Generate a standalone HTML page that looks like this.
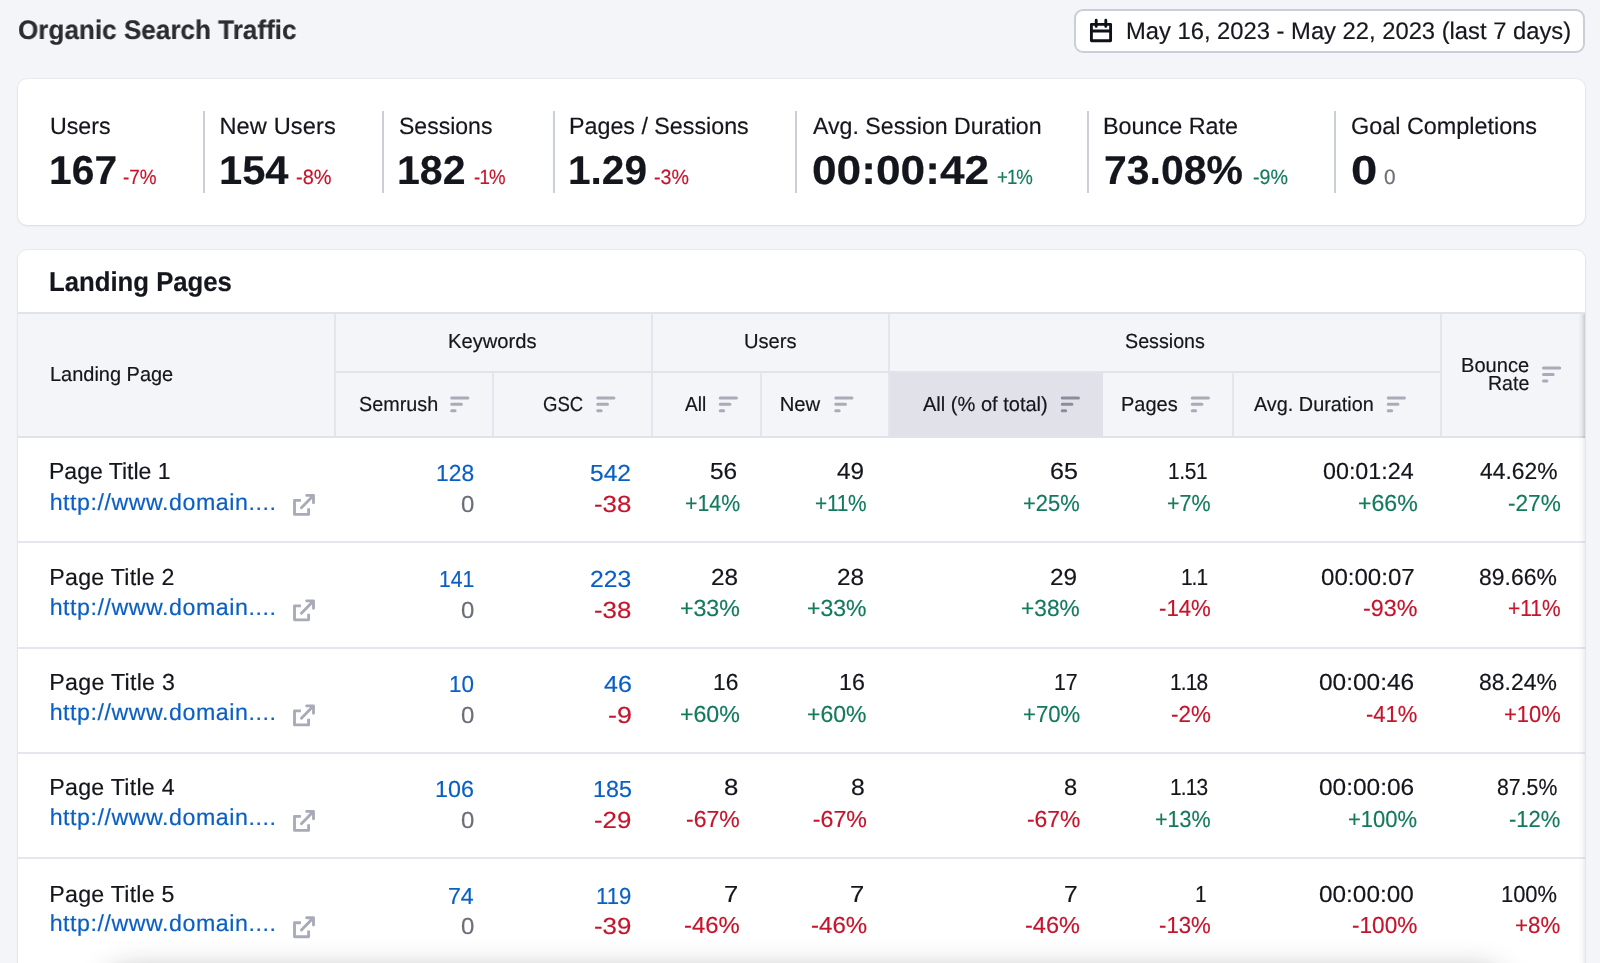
<!DOCTYPE html>
<html lang="en">
<head>
<meta charset="utf-8">
<title>Organic Search Traffic</title>
<style>
html,body{margin:0;padding:0}
body{position:relative;width:1600px;height:963px;overflow:hidden;background:#f4f5f9;font-family:"Liberation Sans", Arial, sans-serif;color:#14161c;text-rendering:geometricPrecision;-webkit-font-smoothing:antialiased}
*{box-sizing:border-box}
header,.card{will-change:transform}
.t{position:absolute;white-space:nowrap;margin:0;font-weight:400;transform-origin:0 0;-webkit-text-stroke:.18px currentColor}
h1.t{font-size:26.8px;line-height:30px;font-weight:700;color:#2b2b30}
.date{position:absolute;left:1074px;top:9px;width:511px;height:44px;background:#fff;border:2px solid #cbced6;border-radius:9px}
.date .t{font-size:24px;line-height:27px;color:#15171d}
.date svg{position:absolute;left:13px;top:7px;fill:none;stroke:#0f1118;stroke-width:2.85;stroke-linecap:round;stroke-linejoin:round}
.card{position:absolute;left:18px;width:1567px;background:#fff;border-radius:9px;box-shadow:0 0 0 1px rgba(25,27,35,.045),0 1px 3px rgba(25,27,35,.07)}
.stats{top:79px;height:146px}
.stat{position:absolute;top:31.5px;height:82px}
.stat+.stat{border-left:2px solid #cdcfd6}
.lbl{font-size:23.6px;line-height:26px}
.val{font-size:40.4px;line-height:46px;font-weight:700!important;color:#14161d}
.dlt{font-size:20.7px;line-height:23px}
.lp{top:250px;height:760px;overflow:hidden;border-radius:9px 9px 0 0}
h2.t{font-size:27.4px;line-height:31px;font-weight:700;color:#14161d}
.thead{position:absolute;left:0;top:62px;width:1567px;height:126px;background:#f4f5f9;border-top:2px solid #e2e3ea;border-bottom:2px solid #e2e3ea}
.thead .t{font-size:20.3px;line-height:22px}
.vl{position:absolute;width:2px;background:#e5e6ed}
.hl{position:absolute;height:2px;background:#e2e3ea}
.act{position:absolute;background:#e0e1e9}
.row{position:absolute;left:0;width:1567px;border-bottom:2px solid #e6e7ee}
.cell{position:absolute;top:0;height:100%}
.row .t{font-size:23.2px;line-height:26px}
.g{color:#6c6e79}.b{color:#0a5fc4}.up{color:#137a5c}.dn{color:#c5142b}
a.t{text-decoration:none}
svg.srt{position:absolute;fill:none;stroke:#a9abb6;stroke-width:3;stroke-linecap:round}
svg.srt.on{stroke:#8a8e9b}
svg.ext{position:absolute;fill:none;stroke:#a8abb7;stroke-width:2.85;stroke-linecap:round;stroke-linejoin:round}
.shr{position:absolute;right:0;width:7px}
.shb{position:absolute;left:105px;width:1400px;top:972px;height:60px;border-radius:24px;box-shadow:0 0 30px 0 rgba(25,27,35,.36)}

</style>
</head>
<body>
<header>
<h1 class="t" style="left:18.23px;top:15px;transform:scaleX(0.974)">Organic Search Traffic</h1>
<div class="date"><svg width="28" height="28" viewBox="0 0 28 28"><path d="M2.4 6.3H21.6V22.7H2.4ZM2.4 13H21.6M7.2 2.2V8.4M16.8 2.2V8.4"/></svg><span class="t" style="left:49.94px;top:7px;transform:scaleX(0.99)">May 16, 2023 - May 22, 2023 (last 7 days)</span></div>
</header>
<section class="card stats">
<div class="stat" style="left:0px;width:184.75px"><span class="t lbl" style="left:31.65px;top:3.5px;transform:scaleX(0.983)">Users</span><b class="t val" style="left:30.55px;top:36.5px;transform:scaleX(1.01)">167</b><span class="t dlt dn" style="left:105.16px;top:55.5px;transform:scaleX(0.914)">-7%</span></div>
<div class="stat" style="left:184.75px;width:178.75px"><span class="t lbl" style="left:14.66px;top:3.5px;letter-spacing:0.12px">New Users</span><b class="t val" style="left:13.89px;top:36.5px;transform:scaleX(1.032)">154</b><span class="t dlt dn" style="left:91.63px;top:55.5px;transform:scaleX(0.964)">-8%</span></div>
<div class="stat" style="left:363.5px;width:171.25px"><span class="t lbl" style="left:15.78px;top:3.5px;transform:scaleX(0.976)">Sessions</span><b class="t val" style="left:13.93px;top:36.5px;transform:scaleX(1.018)">182</b><span class="t dlt dn" style="left:90.42px;top:55.5px;letter-spacing:-0.83px;transform:scaleX(0.9)">-1%</span></div>
<div class="stat" style="left:534.75px;width:242px"><span class="t lbl" style="left:14.18px;top:3.5px;transform:scaleX(0.986)">Pages / Sessions</span><b class="t val" style="left:13.46px;top:36.5px;transform:scaleX(1.005)">1.29</b><span class="t dlt dn" style="left:99.64px;top:55.5px;transform:scaleX(0.949)">-3%</span></div>
<div class="stat" style="left:776.75px;width:292.25px"><span class="t lbl" style="left:16.5px;top:3.5px;transform:scaleX(0.981)">Avg. Session Duration</span><b class="t val" style="left:15.12px;top:36.5px;transform:scaleX(1.096)">00:00:42</b><span class="t dlt up" style="left:200.63px;top:55.5px;letter-spacing:-1.1px;transform:scaleX(0.9)">+1%</span></div>
<div class="stat" style="left:1069px;width:246.5px"><span class="t lbl" style="left:14.47px;top:3.5px;transform:scaleX(0.99)">Bounce Rate</span><b class="t val" style="left:15.02px;top:36.5px;transform:scaleX(1.015)">73.08%</b><span class="t dlt up" style="left:163.58px;top:55.5px;transform:scaleX(0.951)">-9%</span></div>
<div class="stat" style="left:1315.5px;width:251.5px"><span class="t lbl" style="left:15.7px;top:3.5px;transform:scaleX(0.992)">Goal Completions</span><b class="t val" style="left:15.32px;top:36.5px;transform:scaleX(1.17)">0</b><span class="t dlt g" style="left:48.65px;top:55.5px;transform:scaleX(1.005)">0</span></div>
</section>
<section class="card lp">
<h2 class="t" style="left:31.49px;top:16px;transform:scaleX(0.939)">Landing Pages</h2>
<div class="thead">
<div class="act" style="left:871.25px;top:57.3px;width:214px;height:64.7px"></div>
<div class="vl" style="left:316px;top:0;height:122px"></div>
<div class="vl" style="left:633px;top:0;height:122px"></div>
<div class="vl" style="left:870px;top:0;height:122px"></div>
<div class="vl" style="left:1422px;top:0;height:122px"></div>
<div class="vl" style="left:474px;top:59px;height:63px"></div>
<div class="vl" style="left:742px;top:59px;height:63px"></div>
<div class="vl" style="left:1214px;top:59px;height:63px"></div>
<div class="hl" style="left:317px;top:57px;width:1106.25px"></div>
<span class="t" style="left:31.54px;top:50px;transform:scaleX(0.984)">Landing Page</span>
<span class="t" style="left:430.42px;top:17px;transform:scaleX(0.995)">Keywords</span>
<span class="t" style="left:725.74px;top:17px;transform:scaleX(0.993)">Users</span>
<span class="t" style="left:1107.13px;top:17px;transform:scaleX(0.971)">Sessions</span>
<span class="t" style="left:340.63px;top:80px;transform:scaleX(0.975)">Semrush</span>
<span class="t" style="left:525.38px;top:80px;transform:scaleX(0.915)">GSC</span>
<span class="t" style="left:667px;top:80px;transform:scaleX(0.942)">All</span>
<span class="t" style="left:761.66px;top:80px">New</span>
<span class="t" style="left:904.5px;top:80px;transform:scaleX(0.988)">All (% of total)</span>
<span class="t" style="left:1103.44px;top:80px;transform:scaleX(0.985)">Pages</span>
<span class="t" style="left:1235.75px;top:80px;transform:scaleX(0.978)">Avg. Duration</span>
<span class="t" style="left:1442.93px;top:41px;transform:scaleX(0.99)">Bounce</span>
<span class="t" style="left:1469.72px;top:59px;transform:scaleX(0.964)">Rate</span>
<svg class="srt" style="left:431px;top:80px" width="23" height="19" viewBox="0 0 23 19"><path transform="translate(0.2 0.55)" d="M2.5 3.4H18.7M2.5 9.8H12.2M2.5 16.2H5.9"/></svg>
<svg class="srt" style="left:577px;top:80px" width="23" height="19" viewBox="0 0 23 19"><path transform="translate(0.25 0.55)" d="M2.5 3.4H18.7M2.5 9.8H12.2M2.5 16.2H5.9"/></svg>
<svg class="srt" style="left:699px;top:80px" width="23" height="19" viewBox="0 0 23 19"><path transform="translate(0.75 0.55)" d="M2.5 3.4H18.7M2.5 9.8H12.2M2.5 16.2H5.9"/></svg>
<svg class="srt" style="left:815px;top:80px" width="23" height="19" viewBox="0 0 23 19"><path transform="translate(0.25 0.55)" d="M2.5 3.4H18.7M2.5 9.8H12.2M2.5 16.2H5.9"/></svg>
<svg class="srt on" style="left:1041px;top:80px" width="23" height="19" viewBox="0 0 23 19"><path transform="translate(0.75 0.55)" d="M2.5 3.4H18.7M2.5 9.8H12.2M2.5 16.2H5.9"/></svg>
<svg class="srt" style="left:1171px;top:80px" width="23" height="19" viewBox="0 0 23 19"><path transform="translate(0.75 0.55)" d="M2.5 3.4H18.7M2.5 9.8H12.2M2.5 16.2H5.9"/></svg>
<svg class="srt" style="left:1367px;top:80px" width="23" height="19" viewBox="0 0 23 19"><path transform="translate(0.75 0.55)" d="M2.5 3.4H18.7M2.5 9.8H12.2M2.5 16.2H5.9"/></svg>
<svg class="srt" style="left:1523px;top:50px" width="23" height="19" viewBox="0 0 23 19"><path transform="translate(0 0.7)" d="M2.5 3.4H18.7M2.5 9.8H12.2M2.5 16.2H5.9"/></svg>
</div>
<div class="row" style="top:188px;height:105px">
<div class="cell" style="left:0px;width:317px"><span class="t t" style="left:31.3px;top:20px;transform:scaleX(0.993)">Page Title 1</span><a class="t l b" style="left:31.65px;top:51px;letter-spacing:0.55px">http://www.domain....</a><svg class="ext" style="left:272px;top:52px" width="29" height="29" viewBox="0 0 29 29"><g transform="translate(0 0)"><path d="M10.9 10.4H4.5V24.4H18.6V18.3" stroke-linecap="butt"/><path d="M11.4 17.8L23.4 5.5M16.7 5.4H23.5V12.8"/></g></svg></div>
<div class="cell" style="left:317px;width:157px"><span class="t kv b" style="left:101.07px;top:22px;transform:scaleX(0.984)">128</span><span class="t kd g" style="left:125.5px;top:53px;transform:scaleX(1.034)">0</span></div>
<div class="cell" style="left:474px;width:160px"><span class="t kv b" style="left:98.48px;top:22px;transform:scaleX(1.06)">542</span><span class="t kd dn" style="left:102.19px;top:53px;transform:scaleX(1.114)">-38</span></div>
<div class="cell" style="left:634px;width:109px"><span class="t v" style="left:58.48px;top:20px;transform:scaleX(1.056)">56</span><span class="t d up" style="left:32.75px;top:52px;transform:scaleX(0.919)">+14%</span></div>
<div class="cell" style="left:743px;width:128px"><span class="t v" style="left:76.12px;top:20px;transform:scaleX(1.051)">49</span><span class="t d up" style="left:54.27px;top:52px;letter-spacing:-0.31px;transform:scaleX(0.9)">+11%</span></div>
<div class="cell" style="left:871px;width:214px"><span class="t v" style="left:161.07px;top:20px;transform:scaleX(1.083)">65</span><span class="t d up" style="left:134.47px;top:52px;transform:scaleX(0.945)">+25%</span></div>
<div class="cell" style="left:1085px;width:129px"><span class="t v" style="left:65.19px;top:20px;letter-spacing:-0.37px;transform:scaleX(0.9)">1.51</span><span class="t d up" style="left:63.99px;top:52px;transform:scaleX(0.927)">+7%</span></div>
<div class="cell" style="left:1214px;width:209px"><span class="t v" style="left:91.27px;top:20px;transform:scaleX(1.004)">00:01:24</span><span class="t d up" style="left:125.92px;top:52px;transform:scaleX(0.997)">+66%</span></div>
<div class="cell" style="left:1423px;width:144px"><span class="t v" style="left:38.64px;top:20px;transform:scaleX(0.985)">44.62%</span><span class="t d up" style="left:66.79px;top:52px;transform:scaleX(0.976)">-27%</span></div>
</div>
<div class="row" style="top:293px;height:106px">
<div class="cell" style="left:0px;width:317px"><span class="t t" style="left:31.29px;top:21px;letter-spacing:0.25px">Page Title 2</span><a class="t l b" style="left:31.65px;top:51px;letter-spacing:0.55px">http://www.domain....</a><svg class="ext" style="left:272px;top:52px" width="29" height="29" viewBox="0 0 29 29"><g transform="translate(0 0.4)"><path d="M10.9 10.4H4.5V24.4H18.6V18.3" stroke-linecap="butt"/><path d="M11.4 17.8L23.4 5.5M16.7 5.4H23.5V12.8"/></g></svg></div>
<div class="cell" style="left:317px;width:157px"><span class="t kv b" style="left:103.68px;top:23px;transform:scaleX(0.909)">141</span><span class="t kd g" style="left:125.5px;top:54px;transform:scaleX(1.034)">0</span></div>
<div class="cell" style="left:474px;width:160px"><span class="t kv b" style="left:98.34px;top:23px;transform:scaleX(1.063)">223</span><span class="t kd dn" style="left:102.19px;top:54px;transform:scaleX(1.114)">-38</span></div>
<div class="cell" style="left:634px;width:109px"><span class="t v" style="left:58.86px;top:21px;transform:scaleX(1.051)">28</span><span class="t d up" style="left:27.91px;top:52px">+33%</span></div>
<div class="cell" style="left:743px;width:128px"><span class="t v" style="left:76.36px;top:21px;transform:scaleX(1.051)">28</span><span class="t d up" style="left:46.42px;top:52px;transform:scaleX(0.992)">+33%</span></div>
<div class="cell" style="left:871px;width:214px"><span class="t v" style="left:161.36px;top:21px;transform:scaleX(1.051)">29</span><span class="t d up" style="left:132.43px;top:52px;transform:scaleX(0.979)">+38%</span></div>
<div class="cell" style="left:1085px;width:129px"><span class="t v" style="left:77.8px;top:21px;letter-spacing:-1.1px;transform:scaleX(0.9)">1.1</span><span class="t d dn" style="left:55.81px;top:52px;transform:scaleX(0.958)">-14%</span></div>
<div class="cell" style="left:1214px;width:209px"><span class="t v" style="left:88.75px;top:21px;transform:scaleX(1.038)">00:00:07</span><span class="t d dn" style="left:130.77px;top:52px;transform:scaleX(1.005)">-93%</span></div>
<div class="cell" style="left:1423px;width:144px"><span class="t v" style="left:38.28px;top:21px;transform:scaleX(0.99)">89.66%</span><span class="t d dn" style="left:67.02px;top:52px;transform:scaleX(0.903)">+11%</span></div>
</div>
<div class="row" style="top:399px;height:105px">
<div class="cell" style="left:0px;width:317px"><span class="t t" style="left:31.29px;top:20px;letter-spacing:0.29px">Page Title 3</span><a class="t l b" style="left:31.65px;top:50px;letter-spacing:0.55px">http://www.domain....</a><svg class="ext" style="left:272px;top:51px" width="29" height="29" viewBox="0 0 29 29"><g transform="translate(0 0.5)"><path d="M10.9 10.4H4.5V24.4H18.6V18.3" stroke-linecap="butt"/><path d="M11.4 17.8L23.4 5.5M16.7 5.4H23.5V12.8"/></g></svg></div>
<div class="cell" style="left:317px;width:157px"><span class="t kv b" style="left:113.6px;top:22px;transform:scaleX(0.967)">10</span><span class="t kd g" style="left:125.5px;top:53px;transform:scaleX(1.034)">0</span></div>
<div class="cell" style="left:474px;width:160px"><span class="t kv b" style="left:111.61px;top:22px;transform:scaleX(1.081)">46</span><span class="t kd dn" style="left:115.66px;top:53px;transform:scaleX(1.16)">-9</span></div>
<div class="cell" style="left:634px;width:109px"><span class="t v" style="left:60.58px;top:20px;transform:scaleX(0.982)">16</span><span class="t d up" style="left:27.91px;top:52px">+60%</span></div>
<div class="cell" style="left:743px;width:128px"><span class="t v" style="left:77.54px;top:20px;transform:scaleX(1.004)">16</span><span class="t d up" style="left:46.42px;top:52px;transform:scaleX(0.992)">+60%</span></div>
<div class="cell" style="left:871px;width:214px"><span class="t v" style="left:164.67px;top:20px;transform:scaleX(0.918)">17</span><span class="t d up" style="left:133.96px;top:52px;transform:scaleX(0.954)">+70%</span></div>
<div class="cell" style="left:1085px;width:129px"><span class="t v" style="left:66.69px;top:20px;letter-spacing:-0.92px;transform:scaleX(0.9)">1.18</span><span class="t d dn" style="left:67.8px;top:52px;transform:scaleX(0.966)">-2%</span></div>
<div class="cell" style="left:1214px;width:209px"><span class="t v" style="left:87.24px;top:20px;transform:scaleX(1.055)">00:00:46</span><span class="t d dn" style="left:133.81px;top:52px;transform:scaleX(0.948)">-41%</span></div>
<div class="cell" style="left:1423px;width:144px"><span class="t v" style="left:38.28px;top:20px;transform:scaleX(0.99)">88.24%</span><span class="t d dn" style="left:62.97px;top:52px;transform:scaleX(0.945)">+10%</span></div>
</div>
<div class="row" style="top:504px;height:105px">
<div class="cell" style="left:0px;width:317px"><span class="t t" style="left:31.29px;top:20px;letter-spacing:0.26px">Page Title 4</span><a class="t l b" style="left:31.65px;top:50px;letter-spacing:0.55px">http://www.domain....</a><svg class="ext" style="left:272px;top:52px" width="29" height="29" viewBox="0 0 29 29"><g transform="translate(0 0)"><path d="M10.9 10.4H4.5V24.4H18.6V18.3" stroke-linecap="butt"/><path d="M11.4 17.8L23.4 5.5M16.7 5.4H23.5V12.8"/></g></svg></div>
<div class="cell" style="left:317px;width:157px"><span class="t kv b" style="left:100.04px;top:22px;transform:scaleX(1.005)">106</span><span class="t kd g" style="left:125.5px;top:53px;transform:scaleX(1.034)">0</span></div>
<div class="cell" style="left:474px;width:160px"><span class="t kv b" style="left:100.54px;top:22px;transform:scaleX(1.005)">185</span><span class="t kd dn" style="left:102.19px;top:53px;transform:scaleX(1.114)">-29</span></div>
<div class="cell" style="left:634px;width:109px"><span class="t v" style="left:71.69px;top:20px;transform:scaleX(1.112)">8</span><span class="t d dn" style="left:34.28px;top:52px;transform:scaleX(0.991)">-67%</span></div>
<div class="cell" style="left:743px;width:128px"><span class="t v" style="left:89.73px;top:20px;transform:scaleX(1.068)">8</span><span class="t d dn" style="left:51.77px;top:52px">-67%</span></div>
<div class="cell" style="left:871px;width:214px"><span class="t v" style="left:175.26px;top:20px;transform:scaleX(1.023)">8</span><span class="t d dn" style="left:137.79px;top:52px;transform:scaleX(0.986)">-67%</span></div>
<div class="cell" style="left:1085px;width:129px"><span class="t v" style="left:66.69px;top:20px;letter-spacing:-0.92px;transform:scaleX(0.9)">1.13</span><span class="t d up" style="left:51.99px;top:52px;transform:scaleX(0.928)">+13%</span></div>
<div class="cell" style="left:1214px;width:209px"><span class="t v" style="left:87.24px;top:20px;transform:scaleX(1.055)">00:00:06</span><span class="t d up" style="left:115.97px;top:52px;transform:scaleX(0.949)">+100%</span></div>
<div class="cell" style="left:1423px;width:144px"><span class="t v" style="left:55.84px;top:20px;transform:scaleX(0.917)">87.5%</span><span class="t d up" style="left:68.31px;top:52px;transform:scaleX(0.948)">-12%</span></div>
</div>
<div class="row" style="top:609px;height:106px">
<div class="cell" style="left:0px;width:317px"><span class="t t" style="left:31.29px;top:22px;letter-spacing:0.25px">Page Title 5</span><a class="t l b" style="left:31.65px;top:51px;letter-spacing:0.55px">http://www.domain....</a><svg class="ext" style="left:272px;top:53px" width="29" height="29" viewBox="0 0 29 29"><g transform="translate(0 0.3)"><path d="M10.9 10.4H4.5V24.4H18.6V18.3" stroke-linecap="butt"/><path d="M11.4 17.8L23.4 5.5M16.7 5.4H23.5V12.8"/></g></svg></div>
<div class="cell" style="left:317px;width:157px"><span class="t kv b" style="left:112.92px;top:24px;transform:scaleX(0.994)">74</span><span class="t kd g" style="left:125.5px;top:54px;transform:scaleX(1.034)">0</span></div>
<div class="cell" style="left:474px;width:160px"><span class="t kv b" style="left:104.12px;top:24px;transform:scaleX(0.954)">119</span><span class="t kd dn" style="left:102.19px;top:54px;transform:scaleX(1.114)">-39</span></div>
<div class="cell" style="left:634px;width:109px"><span class="t v" style="left:71.8px;top:22px;transform:scaleX(1.103)">7</span><span class="t d dn" style="left:32.25px;top:53px;transform:scaleX(1.029)">-46%</span></div>
<div class="cell" style="left:743px;width:128px"><span class="t v" style="left:89.3px;top:22px;transform:scaleX(1.103)">7</span><span class="t d dn" style="left:49.75px;top:53px;transform:scaleX(1.038)">-46%</span></div>
<div class="cell" style="left:871px;width:214px"><span class="t v" style="left:174.85px;top:22px;transform:scaleX(1.058)">7</span><span class="t d dn" style="left:136.26px;top:53px;transform:scaleX(1.014)">-46%</span></div>
<div class="cell" style="left:1085px;width:129px"><span class="t v" style="left:92.23px;top:22px;transform:scaleX(0.9)">1</span><span class="t d dn" style="left:55.81px;top:53px;transform:scaleX(0.958)">-13%</span></div>
<div class="cell" style="left:1214px;width:209px"><span class="t v" style="left:87.24px;top:22px;transform:scaleX(1.05)">00:00:00</span><span class="t d dn" style="left:119.79px;top:53px;transform:scaleX(0.975)">-100%</span></div>
<div class="cell" style="left:1423px;width:144px"><span class="t v" style="left:60.13px;top:22px;transform:scaleX(0.944)">100%</span><span class="t d dn" style="left:74.46px;top:53px;transform:scaleX(0.96)">+8%</span></div>
</div>
<div class="shr" style="top:64px;height:124px;background:linear-gradient(to left,rgba(25,27,35,.2),rgba(25,27,35,.06) 45%,rgba(25,27,35,0))"></div>
<div class="shr" style="top:188px;height:600px;background:linear-gradient(to left,rgba(25,27,35,.075),rgba(25,27,35,.025) 45%,rgba(25,27,35,0))"></div>
</section>
<div class="shb"></div>
</body>
</html>
